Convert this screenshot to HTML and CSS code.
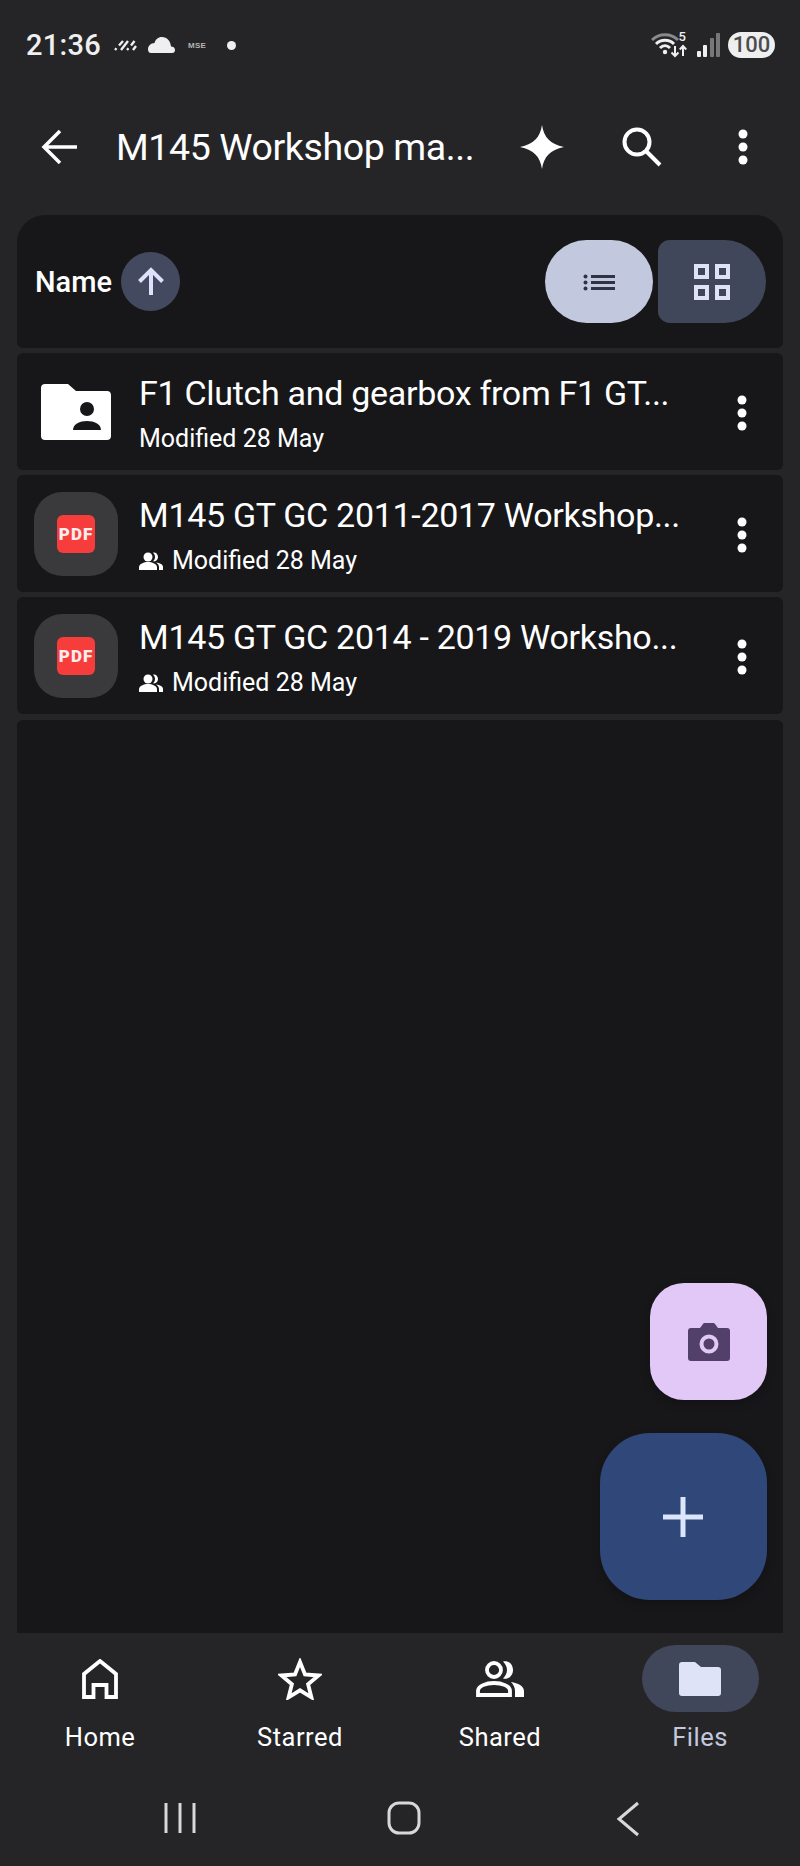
FILE: index.html
```html
<!DOCTYPE html>
<html lang="en">
<head>
  <meta charset="UTF-8" />
  <meta name="viewport" content="width=device-width, initial-scale=1.0"/>
  <title>M145 Workshop manuals</title>
  <link rel="stylesheet" href="styles.css">
</head>
<body>

<!-- Status bar -->
<div class="statusbar">
  <div class="status-left">
    <span class="clock">21:36</span>
    <svg class="ic-haze" width="24" height="12" viewBox="0 0 24 12"><path d="M1 11l1.500-1.700M5 6.500L9 2M7 11l7-9M13 11l1.500-1.700M17 6.500L20.500 2M19 11l3-4"/></svg>
    <svg class="ic-cloud" width="27" height="16" viewBox="0 0 27 16"><path d="M3 16h21c2.500 0 3-1.500 3-3 0-2.500-2-3.500-4-3.500C22.500 4 19 0 14 0 10 0 7.500 2.500 6.500 6 3 6 0 9 0 12c0 2.500 1 4 3 4z"/></svg>
    <span class="mse">MSE</span>
    <span class="status-dot"></span>
  </div>
  <div class="status-right">
    <svg class="ic-wifi" width="36" height="26" viewBox="0 0 36 26">
      <path class="dim" d="M1 8C8 1 20 1 27 8"/>
      <path d="M5 12c5-5 13-5 18 0M9 16c3-3 7-3 10 0"/>
      <circle class="solid" cx="14" cy="20" r="2.200"/>
      <path class="thin" d="M24 14v10M20.500 20.500l3.500 3.500 3.500-3.500M32 24V14M28.800 17.500L32 14l3.200 3.500"/>
    </svg>
    <span class="wifi-num">5</span>
    <div class="signal">
      <i class="b1"></i><i class="b2"></i><i class="b3"></i><i class="b4"></i>
    </div>
    <span class="battery">100</span>
  </div>
</div>

<!-- App bar -->
<div class="appbar">
  <svg class="ic-back" width="38" height="36" viewBox="0 0 38 36"><path d="M36 18H4M19 2L3 18l16 16"/></svg>
  <span class="title">M145 Workshop ma...</span>
  <svg class="ic-spark" width="44" height="44" viewBox="0 0 44 44"><path d="M22 0c2 12.500 8 19 22 22-14 3-20 9.500-22 22-2-12.500-8-19-22-22 14-3 20-9.500 22-22z"/></svg>
  <svg class="ic-search" width="40" height="40" viewBox="0 0 40 40"><circle cx="15" cy="15" r="12.500"/><path d="M24 24l14 14"/></svg>
  <svg class="kebab" width="10" height="36" viewBox="0 0 10 36"><circle cx="5" cy="5" r="4.500"/><circle cx="5" cy="18" r="4.500"/><circle cx="5" cy="31" r="4.500"/></svg>
</div>

<div class="main-content">

  <!-- Sort + view toggle -->
  <div class="panel sortbar">
    <span class="sort-label">Name</span>
    <span class="sort-dir">
      <svg width="30" height="30" viewBox="0 0 30 30"><path d="M15 28V3M3.500 14.500L15 3l11.500 11.500"/></svg>
    </span>
    <div class="view-toggle">
      <span class="view-btn list-btn">
        <svg width="32" height="20" viewBox="0 0 32 20"><path d="M8 3h24v3H8zM8 9h24v3H8zM8 15h24v3H8z"/><circle cx="2.500" cy="4.500" r="2"/><circle cx="2.500" cy="10.500" r="2"/><circle cx="2.500" cy="16.500" r="2"/></svg>
      </span>
      <span class="view-btn grid-btn">
        <svg width="36" height="36" viewBox="0 0 36 36"><path d="M2 2h11v11H2zM23 2h11v11H23zM2 23h11v11H2zM23 23h11v11H23z"/></svg>
      </span>
    </div>
  </div>

  <!-- File rows -->
  <div class="panel row">
    <svg class="ic-shared-folder" width="70" height="56" viewBox="0 0 70 56">
      <path class="folder" d="M4 0h23l8 7h31c2.500 0 4 1.500 4 4v41c0 2.500-1.500 4-4 4H4c-2.500 0-4-1.500-4-4V4c0-2.500 1.500-4 4-4z"/>
      <circle class="cut" cx="46" cy="25" r="7"/>
      <path class="cut" d="M32 46c0-6 7-9 14-9s14 3 14 9z"/>
    </svg>
    <div class="row-text">
      <div class="row-title">F1 Clutch and gearbox from F1 GT...</div>
      <div class="row-sub">Modified 28 May</div>
    </div>
    <svg class="kebab" width="10" height="36" viewBox="0 0 10 36"><circle cx="5" cy="5" r="4.500"/><circle cx="5" cy="18" r="4.500"/><circle cx="5" cy="31" r="4.500"/></svg>
  </div>

  <div class="panel row">
    <div class="pdf-tile"><span class="pdf-badge">PDF</span></div>
    <div class="row-text">
      <div class="row-title">M145 GT GC 2011-2017 Workshop...</div>
      <div class="row-sub">
        <svg class="ic-people" width="24" height="18" viewBox="0 0 24 18"><circle cx="9" cy="5" r="4.500"/><path d="M0 18v-3c0-3 5-5 9-5s9 2 9 5v3z"/><path d="M14 .700c2.500-.700 5 1.300 5 4.300s-2.500 5-5 4.300c1.500-1.300 2-2.800 2-4.300s-.5-3-2-4.300zM17 10.500c4 .5 7 2 7 4.500v3h-4v-3c0-1.800-1.200-3.300-3-4.500z"/></svg>
        Modified 28 May
      </div>
    </div>
    <svg class="kebab" width="10" height="36" viewBox="0 0 10 36"><circle cx="5" cy="5" r="4.500"/><circle cx="5" cy="18" r="4.500"/><circle cx="5" cy="31" r="4.500"/></svg>
  </div>

  <div class="panel row">
    <div class="pdf-tile"><span class="pdf-badge">PDF</span></div>
    <div class="row-text">
      <div class="row-title">M145 GT GC 2014 - 2019 Worksho...</div>
      <div class="row-sub">
        <svg class="ic-people" width="24" height="18" viewBox="0 0 24 18"><circle cx="9" cy="5" r="4.500"/><path d="M0 18v-3c0-3 5-5 9-5s9 2 9 5v3z"/><path d="M14 .700c2.500-.700 5 1.300 5 4.300s-2.500 5-5 4.300c1.500-1.300 2-2.800 2-4.300s-.5-3-2-4.300zM17 10.500c4 .5 7 2 7 4.500v3h-4v-3c0-1.800-1.200-3.300-3-4.500z"/></svg>
        Modified 28 May
      </div>
    </div>
    <svg class="kebab" width="10" height="36" viewBox="0 0 10 36"><circle cx="5" cy="5" r="4.500"/><circle cx="5" cy="18" r="4.500"/><circle cx="5" cy="31" r="4.500"/></svg>
  </div>

  <!-- Empty rest of the list, FABs float over it -->
  <div class="panel filler">
    <div class="fab fab-camera">
      <svg width="42" height="38" viewBox="0 0 42 38">
        <path class="body" d="M3 5h9l3-4c.5-.7 1-1 2-1h8c1 0 1.500.3 2 1l3 4h9c2 0 3 1 3 3v27c0 2-1 3-3 3H3c-2 0-3-1-3-3V8c0-2 1-3 3-3z"/>
        <circle class="lens" cx="21" cy="21" r="7.500"/>
      </svg>
    </div>
    <div class="fab fab-add">
      <svg width="40" height="40" viewBox="0 0 40 40"><path d="M20 0v40M0 20h40"/></svg>
    </div>
  </div>
</div>

<!-- Bottom navigation -->
<div class="bottomnav">
  <div class="nav-item">
    <span class="nav-icon">
      <svg class="line" width="36" height="40" viewBox="0 0 36 40"><path d="M2 38V15L18 2l16 13v23H24.500V26h-13v12z"/></svg>
    </span>
    <span class="nav-label">Home</span>
  </div>
  <div class="nav-item">
    <span class="nav-icon">
      <svg class="line" width="44" height="42" viewBox="0 0 44 42"><path d="M22 4l5 12.500 13.500 1-10.400 8.700 3.300 13.100L22 32.300l-11.400 7 3.300-13.100L3.500 17.500l13.500-1z"/></svg>
    </span>
    <span class="nav-label">Starred</span>
  </div>
  <div class="nav-item">
    <span class="nav-icon">
      <svg class="line" width="48" height="36" viewBox="0 0 48 36">
        <circle cx="18" cy="9" r="7"/>
        <path d="M2 34v-4c0-5 8-8 16-8s16 3 16 8v4z"/>
        <path class="fill" d="M27 .500c5-1.500 10 2.500 10 8.500s-5 10-10 8.500c2.500-2.500 4-5.500 4-8.500s-1.500-6-4-8.500zM35 21c7 1 13 4 13 9v6h-9v-6c0-3.500-1.500-6.500-4-9z"/>
      </svg>
    </span>
    <span class="nav-label">Shared</span>
  </div>
  <div class="nav-item active">
    <span class="nav-icon">
      <svg width="42" height="34" viewBox="0 0 42 34"><path d="M3 0h13l6 5h17c2 0 3 1 3 3v23c0 2-1 3-3 3H3c-2 0-3-1-3-3V3c0-2 1-3 3-3z"/></svg>
    </span>
    <span class="nav-label">Files</span>
  </div>
</div>

<!-- System gesture buttons -->
<div class="sysnav">
  <svg width="32" height="34" viewBox="0 0 32 34"><path d="M2 2v30M16 2v30M30 2v30"/></svg>
  <svg width="34" height="34" viewBox="0 0 34 34"><rect x="2" y="2" width="30" height="30" rx="10"/></svg>
  <svg width="24" height="36" viewBox="0 0 24 36"><path d="M22 2L3 18l19 16"/></svg>
</div>

</body>
</html>
```

FILE: styles.css
```css
/* Global styles */
body {
  margin: 0;
  width: 800px;
  height: 1866px;
  display: flex;
  flex-direction: column;
  overflow: hidden;
  background-color: #252527;
  color: #fff;
  font-family: Roboto, 'Liberation Sans', sans-serif;
}

svg {
  display: block;
  flex-shrink: 0;
}

/* Status bar */
.statusbar {
  height: 90px;
  padding: 0 25px 0 26px;
  display: flex;
  align-items: center;
  justify-content: space-between;
  box-sizing: border-box;
}

.status-left,
.status-right {
  display: flex;
  align-items: center;
}

.clock {
  font-size: 29px;
  font-weight: 500;
  letter-spacing: 0.3px;
  color: #efeff0;
  width: 88px;
}

.ic-haze {
  fill: none;
  stroke: #efeff0;
  stroke-width: 2.400;
  margin-right: 10px;
}

.ic-cloud {
  fill: #efeff0;
  margin-right: 13px;
}

.mse {
  font-family: 'Liberation Sans', sans-serif;
  font-size: 8px;
  font-weight: 700;
  letter-spacing: 0.3px;
  color: #b4b4b6;
  width: 39px;
}

.status-dot {
  width: 9px;
  height: 9px;
  border-radius: 50%;
  background-color: #efeff0;
}

.status-right {
  position: relative;
}

.ic-wifi {
  fill: none;
  stroke: #efeff0;
  stroke-width: 3;
  margin-right: 10px;
}

.ic-wifi .dim {
  stroke: #8a8a8c;
}

.ic-wifi .solid {
  fill: #efeff0;
  stroke: none;
}

.ic-wifi .thin {
  stroke-width: 2;
}

.wifi-num {
  position: absolute;
  left: 28px;
  top: -3px;
  font-size: 13px;
  font-weight: 500;
  color: #efeff0;
}

.signal {
  display: flex;
  align-items: flex-end;
  height: 24px;
  gap: 2.5px;
  margin-right: 8px;
}

.signal i {
  display: block;
  width: 4px;
  border-radius: 1px;
}

.signal .b1 { height: 6px; background-color: #efeff0; }
.signal .b2 { height: 12px; background-color: #efeff0; }
.signal .b3 { height: 19px; background-color: #77777a; }
.signal .b4 { height: 24px; background-color: #77777a; }

.battery {
  width: 47px;
  height: 26px;
  border-radius: 13px;
  background-color: #efeff0;
  color: #4c4c4e;
  font-size: 22px;
  font-weight: 500;
  line-height: 26px;
  text-align: center;
}

/* App bar */
.appbar {
  height: 114px;
  padding-left: 41px;
  display: flex;
  align-items: center;
  box-sizing: border-box;
}

.ic-back {
  fill: none;
  stroke: #fff;
  stroke-width: 3.5;
  margin-right: 37px;
}

.title {
  font-size: 37.5px;
  letter-spacing: -0.4px;
  width: 404px;
  white-space: nowrap;
}

.ic-spark {
  fill: #fff;
  margin-right: 58px;
}

.ic-search {
  fill: none;
  stroke: #fff;
  stroke-width: 4;
  margin-right: 76px;
}

.kebab {
  fill: #fff;
}

/* Main list */
.main-content {
  flex: 1;
  margin-top: 11px;
  padding: 0 17px;
  display: flex;
  flex-direction: column;
  gap: 5px;
}

.panel {
  background-color: #17171a;
  border-radius: 6px;
}

.sortbar {
  height: 133px;
  border-radius: 28px 28px 6px 6px;
  padding: 0 17px 0 18px;
  display: flex;
  align-items: center;
  box-sizing: border-box;
}

.sort-label {
  font-size: 29px;
  font-weight: 500;
  margin-right: 9px;
}

.sort-dir {
  width: 59px;
  height: 59px;
  border-radius: 50%;
  background-color: #434a60;
  display: flex;
  align-items: center;
  justify-content: center;
}

.sort-dir svg {
  fill: none;
  stroke: #dde1f9;
  stroke-width: 4;
}

.view-toggle {
  margin-left: auto;
  display: flex;
  gap: 5px;
}

.view-btn {
  width: 108px;
  height: 83px;
  display: flex;
  align-items: center;
  justify-content: center;
}

.list-btn {
  background-color: #c2c8de;
  border-radius: 42px;
  fill: #2e3348;
}

.grid-btn {
  background-color: #41475a;
  border-radius: 12px 42px 42px 12px;
  fill: none;
  stroke: #dfe3f8;
  stroke-width: 4;
}

.row {
  height: 117px;
  padding: 0 36px 0 17px;
  display: flex;
  align-items: center;
  box-sizing: border-box;
}

.row .kebab {
  margin-top: 2px;
}

.ic-shared-folder {
  margin: 0 7px 0 7px;
}

.folder {
  fill: #fff;
}

.cut {
  fill: #17171a;
}

.pdf-tile {
  width: 84px;
  height: 84px;
  border-radius: 28px;
  background-color: #3a3a3c;
  display: flex;
  align-items: center;
  justify-content: center;
  flex-shrink: 0;
}

.pdf-badge {
  width: 38px;
  height: 38px;
  border-radius: 6px;
  background-color: #f73c3c;
  color: #fdeeee;
  font-size: 17px;
  font-weight: 900;
  letter-spacing: 1px;
  line-height: 38px;
  text-align: center;
}

.row-text {
  flex: 1;
  margin-left: 21px;
  padding-top: 5px;
  white-space: nowrap;
}

.row-title {
  font-size: 34px;
  letter-spacing: -0.3px;
  line-height: 42px;
}

.row-sub {
  display: flex;
  align-items: center;
  gap: 9px;
  margin-top: 8px;
  font-size: 25px;
  line-height: 34px;
}

.ic-people {
  fill: #fff;
}

.filler {
  flex: 1;
  margin-top: 1px;
  border-radius: 6px 6px 0 0;
  position: relative;
}

/* Floating action buttons */
.fab {
  position: absolute;
  right: 16px;
  display: flex;
  align-items: center;
  justify-content: center;
  box-shadow: 0 4px 10px rgba(0, 0, 0, 0.2);
}

.fab-camera {
  top: 563px;
  width: 117px;
  height: 117px;
  border-radius: 34px;
  background-color: #e2c8f7;
}

.fab-camera .body {
  fill: #53406a;
}

.fab-camera .lens {
  fill: #53406a;
  stroke: #e2c8f7;
  stroke-width: 4;
}

.fab-add {
  top: 713px;
  width: 167px;
  height: 167px;
  border-radius: 50px;
  background-color: #2f4779;
}

.fab-add svg {
  stroke: #dbe5fb;
  stroke-width: 5;
  margin-right: 2px;
}

/* Bottom navigation */
.bottomnav {
  display: grid;
  grid-template-columns: repeat(4, 1fr);
  height: 150px;
  padding-top: 12px;
  box-sizing: border-box;
}

.nav-item {
  display: flex;
  flex-direction: column;
  align-items: center;
}

.nav-icon {
  width: 117px;
  height: 67px;
  border-radius: 34px;
  display: flex;
  align-items: center;
  justify-content: center;
}

.nav-icon .line {
  fill: none;
  stroke: #fff;
  stroke-width: 3.800;
}

.nav-icon .fill {
  fill: #fff;
  stroke: none;
}

.nav-label {
  margin-top: 10px;
  font-size: 25.5px;
  letter-spacing: 0.5px;
  line-height: 30px;
}

.nav-item.active .nav-icon {
  background-color: #41475a;
  fill: #dfe3f8;
}

.nav-item.active .nav-label {
  color: #c2c8de;
}

/* System buttons */
.sysnav {
  height: 83px;
  display: grid;
  grid-template-columns: repeat(3, 224px);
  justify-content: center;
  justify-items: center;
  padding-left: 8px;
  box-sizing: border-box;
}

.sysnav svg {
  margin-top: 18px;
  fill: none;
  stroke: #d8d8da;
  stroke-width: 3;
}
```
